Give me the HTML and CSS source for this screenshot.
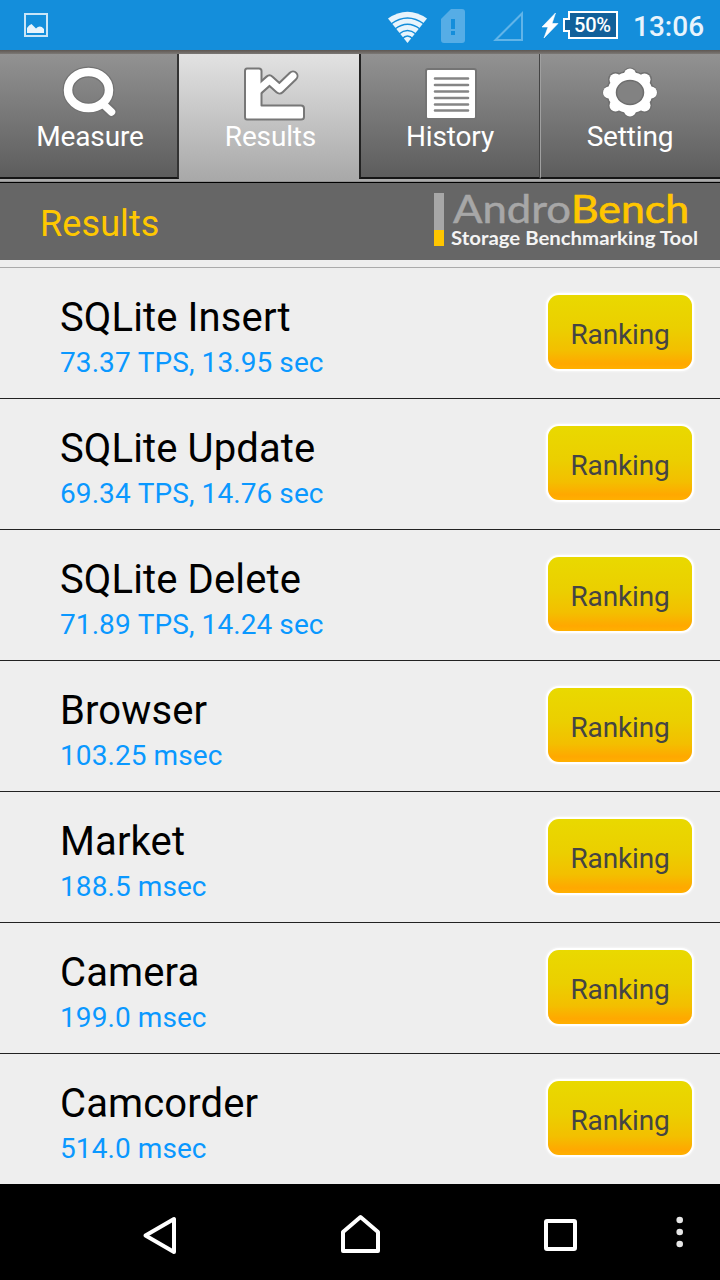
FILE: index.html
```html
<!DOCTYPE html>
<html lang="en">
<head>
<meta charset="utf-8">
<title>AndroBench</title>
<link rel="stylesheet" href="styles.css">
</head>
<body>
<header class="status">
  <svg class="status-picture" width="24" height="24" viewBox="0 0 24 24"><path d="M1 1H23V23H1Z" fill="none" stroke="#c9e5f7" stroke-width="2"/><path d="M3 20V15Q5 12 7.500 11L12 15.500Q16 11.500 20 16V20Z" fill="#e8f4fc"/></svg>
  <svg class="status-wifi" width="39" height="33" viewBox="0 0 39 33"><path d="M0 7.500Q19.500-6 39 7.500L19.500 32Z" fill="#e8f4fc"/><path d="M3 13Q19.500 1 36 13M7 18Q19.500 8.500 32 18M11 23Q19.500 16 28 23M14 28Q19.500 22 25 28" fill="none" stroke="#148edb" stroke-width="1.500"/></svg>
  <svg class="status-sim" width="24" height="34" viewBox="0 0 24 34"><path d="M10 0H21Q24 0 24 3V31Q24 34 21 34H3Q0 34 0 31V10Z" fill="#56ade6"/><path d="M10 10h4v10h-4zM10 22h4v4h-4z" fill="#148edb"/></svg>
  <svg class="status-signal" width="30" height="30" viewBox="0 0 30 30"><path d="M2.500 29L29 2.500V29Z" fill="none" stroke="#61b4e8" stroke-width="2"/></svg>
  <svg class="status-bolt" width="16" height="25" viewBox="0 0 16 25"><path d="M13.500 0L0 14H6L2 25L16 10.500H10Z" fill="#fff" stroke="#fff" stroke-width=".6"/></svg>
  <div class="battery">
    <svg class="battery-shape" width="55" height="28" viewBox="0 0 55 28"><path d="M6 1H54V27H6V20H1V8H6Z" fill="#11609a" stroke="#fff" stroke-width="2"/></svg>
    <span class="battery-text">50%</span>
  </div>
  <span class="clock">13:06</span>
</header>

<nav class="tabs">
  <div class="tab tab-measure">
    <svg class="tab-icon" width="64" height="60" viewBox="0 0 64 60"><g fill="none" stroke-linecap="round"><g stroke="#727272" stroke-width="11"><ellipse cx="30.500" cy="28" rx="20.500" ry="18"/><path d="M45 42L53.500 50"/></g><g stroke="#fff" stroke-width="8.500"><ellipse cx="30.500" cy="28" rx="20.500" ry="18"/><path d="M45 42L53.500 50" stroke-width="7.500"/></g></g></svg>
    <span class="tab-label">Measure</span>
  </div>
  <div class="tab tab-results">
    <svg class="tab-icon" width="64" height="60" viewBox="0 0 64 60"><g stroke-linejoin="round" stroke-linecap="round"><path d="M18 29L30.500 18L40.500 27L54 14" fill="none" stroke="#777" stroke-width="11"/><path d="M8 6.500H20Q22.500 6.500 22.500 9V43.500H62Q65 43.500 65 46.500V55Q65 57.500 62 57.500H8Q6 57.500 6 55V9Q6 6.500 8 6.500Z" fill="#fff" stroke="#777" stroke-width="2"/><path d="M17 30L30.500 18L40.500 27L54 14" fill="none" stroke="#fff" stroke-width="7"/></g></svg>
    <span class="tab-label">Results</span>
  </div>
  <div class="tab tab-history">
    <svg class="tab-icon" width="64" height="60" viewBox="0 0 64 60"><rect x="8" y="7" width="50" height="50" rx="2" fill="#fff" stroke="#747474" stroke-width="2"/><path d="M17 16.500H50M17 23H50M17 29.500H50M17 36H50M17 42.500H50M17 48.500H50" stroke="#858585" stroke-width="2.600" stroke-linecap="round"/></svg>
    <span class="tab-label">History</span>
  </div>
  <div class="tab tab-setting">
    <svg class="tab-icon" width="64" height="60" viewBox="0 0 64 60"><g fill="#707070"><ellipse cx="32" cy="30.500" rx="24" ry="22"/><circle cx="32" cy="13" r="7.500"/><circle cx="32" cy="48" r="7.500"/><circle cx="12" cy="30.500" r="7.500"/><circle cx="52" cy="30.500" r="7.500"/><circle cx="17.500" cy="17.500" r="7.500"/><circle cx="46.500" cy="17.500" r="7.500"/><circle cx="17.500" cy="43.500" r="7.500"/><circle cx="46.500" cy="43.500" r="7.500"/></g><g fill="#fff"><ellipse cx="32" cy="30.500" rx="22.500" ry="20.500"/><circle cx="32" cy="12.500" r="6"/><circle cx="32" cy="48.500" r="6"/><circle cx="11" cy="30.500" r="6"/><circle cx="53" cy="30.500" r="6"/><circle cx="17.500" cy="17.500" r="6"/><circle cx="46.500" cy="17.500" r="6"/><circle cx="17.500" cy="43.500" r="6"/><circle cx="46.500" cy="43.500" r="6"/></g><ellipse cx="32" cy="30.500" rx="13.500" ry="12" fill="#828282" stroke="#6d6d6d" stroke-width="1.500"/></svg>
    <span class="tab-label">Setting</span>
  </div>
</nav>

<section class="title-bar">
  <h1 class="title">Results</h1>
  <svg class="logo" width="270" height="60" viewBox="0 0 270 60">
    <rect x="4" y="3" width="10" height="37" fill="#a7a7a7"/>
    <rect x="4" y="40" width="10" height="16" fill="#ffc600"/>
    <g class="logo-name"><text x="23" y="33" textLength="118" lengthAdjust="spacingAndGlyphs" fill="#a7a7a7" stroke="#a7a7a7" stroke-width=".5">Andro</text><text x="141" y="33" textLength="118" lengthAdjust="spacingAndGlyphs" fill="#ffc600" stroke="#ffc600" stroke-width=".7">Bench</text></g>
    <text class="logo-tag" x="21" y="55" textLength="247" lengthAdjust="spacingAndGlyphs">Storage Benchmarking Tool</text>
  </svg>
</section>

<main class="list">
  <article class="row"><div class="info"><h2 class="name">SQLite Insert</h2><p class="value">73.37 TPS, 13.95 sec</p></div><button class="ranking">Ranking</button></article>
  <article class="row"><div class="info"><h2 class="name">SQLite Update</h2><p class="value">69.34 TPS, 14.76 sec</p></div><button class="ranking">Ranking</button></article>
  <article class="row"><div class="info"><h2 class="name">SQLite Delete</h2><p class="value">71.89 TPS, 14.24 sec</p></div><button class="ranking">Ranking</button></article>
  <article class="row"><div class="info"><h2 class="name">Browser</h2><p class="value">103.25 msec</p></div><button class="ranking">Ranking</button></article>
  <article class="row"><div class="info"><h2 class="name">Market</h2><p class="value">188.5 msec</p></div><button class="ranking">Ranking</button></article>
  <article class="row"><div class="info"><h2 class="name">Camera</h2><p class="value">199.0 msec</p></div><button class="ranking">Ranking</button></article>
  <article class="row"><div class="info"><h2 class="name">Camcorder</h2><p class="value">514.0 msec</p></div><button class="ranking">Ranking</button></article>
</main>

<footer class="navbar">
  <svg class="nav-back" width="36" height="40" viewBox="0 0 36 40"><path d="M3.500 20.500L32 4V37Z" fill="none" stroke="#fff" stroke-width="4" stroke-linejoin="round"/></svg>
  <svg class="nav-home" width="40" height="40" viewBox="0 0 40 40"><path d="M3 37V18L20.500 3L38 18V37Z" fill="none" stroke="#fff" stroke-width="4" stroke-linejoin="round"/></svg>
  <svg class="nav-recent" width="34" height="34" viewBox="0 0 34 34"><rect x="3" y="3" width="29" height="28" rx="1" fill="none" stroke="#fff" stroke-width="4"/></svg>
  <svg class="nav-more" width="8" height="34" viewBox="0 0 8 34"><g fill="#e6e6e6"><circle cx="3.700" cy="4" r="3.300"/><circle cx="3.700" cy="16" r="3.300"/><circle cx="3.700" cy="28" r="3.300"/></g></svg>
</footer>
</body>
</html>
```
FILE: styles.css
```css
* { box-sizing: border-box; }
body { margin: 0; width: 720px; height: 1280px; overflow: hidden; display: flex; flex-direction: column; background: #eee; font-family: Roboto, sans-serif; }
svg { display: block; flex: none; overflow: visible; }
h1, h2, p { margin: 0; font-weight: 400; white-space: nowrap; }

.status { height: 50px; flex: none; display: flex; align-items: flex-start; background: #148edb; }
.status-picture { margin: 13px 0 0 24px; }
.status-wifi { margin: 11px 0 0 340px; }
.status-sim { margin: 9px 0 0 14px; }
.status-signal { margin: 11px 0 0 28px; }
.status-bolt { margin: 13px 0 0 19px; }
.battery { position: relative; margin: 11px 0 0 5px; width: 55px; height: 28px; }
.battery-text { position: absolute; left: 11px; top: 2px; color: #fff; font-size: 20px; line-height: 24px; font-weight: 500; letter-spacing: -.2px; }
.clock { margin: 10px 0 0 15px; color: #e8f4fc; font-size: 28px; line-height: 33px; font-weight: 500; }

.tabs { height: 133px; flex: none; display: grid; grid-template-columns: 179px 180px 181px 180px; padding-top: 4px; background: linear-gradient(#5e5752 0, #7c7875 4px, #aaa 5px, #aaa 131px, #777 132px); border-bottom: 1px solid #000; }
.tab { height: 125px; display: flex; flex-direction: column; align-items: center; background: linear-gradient(#929292, #5d5d5d); border-bottom: 2px solid #151515; }
.tab-measure { border-right: 2px solid #333; padding-left: 3px; }
.tab-results { height: 127px; background: linear-gradient(#e2e2e2, #a8a8a8); border-bottom: 0; padding-left: 3px; }
.tab-history { border-left: 2px solid #222; border-right: 1px solid #444; }
.tab-setting { border-left: 1px solid #a0a0a0; padding-right: 1px; }
.tab-icon { margin-top: 8px; }
.tab-label { margin-top: -2px; color: #fff; font-size: 28px; line-height: 33px; letter-spacing: -.15px; }

.title-bar { height: 77px; flex: none; display: flex; align-items: flex-start; justify-content: space-between; padding: 0 20px 0 40px; background: #666; }
.title { margin-top: 20px; color: #ffc800; font-size: 36px; line-height: 42px; letter-spacing: .1px; }
.logo { margin-top: 7px; }
.logo-name { font: 400 39px Lato, sans-serif; }
.logo-tag { font: 700 18px Lato, sans-serif; fill: #f4f4f4; }

.list { flex: none; margin-top: 7px; border-top: 1px solid #aaa; height: 917px; overflow: hidden; }
.row { height: 131px; display: flex; justify-content: space-between; align-items: flex-start; padding: 26px 28px 0 60px; border-bottom: 1px solid #222; }
.row:last-child { border-bottom: 0; }
.name { color: #000; font-size: 40px; line-height: 47px; letter-spacing: .12px; }
.value { margin-top: 5px; color: #0a98ff; font-size: 28px; line-height: 33px; font-kerning: none; letter-spacing: .08px; }
.ranking { width: 144px; height: 74px; margin-top: 1px; padding: 5px 0 0; border: 0; border-radius: 11px; background: linear-gradient(#e9d900 0, #ebcf00 45%, #f3bf00 75%, #ffa800 93%, #ffb000 100%); box-shadow: 0 0 0 2px #fff, 0 0 3px 2px #fff; color: #444; font: 400 28px/33px Roboto, sans-serif; letter-spacing: -.15px; }

.navbar { height: 96px; flex: none; display: flex; align-items: flex-start; background: #000; }
.nav-back { margin: 31px 0 0 142px; }
.nav-home { margin: 30px 0 0 162px; }
.nav-recent { margin: 34px 0 0 163px; }
.nav-more { margin: 32px 0 0 99px; }
```
